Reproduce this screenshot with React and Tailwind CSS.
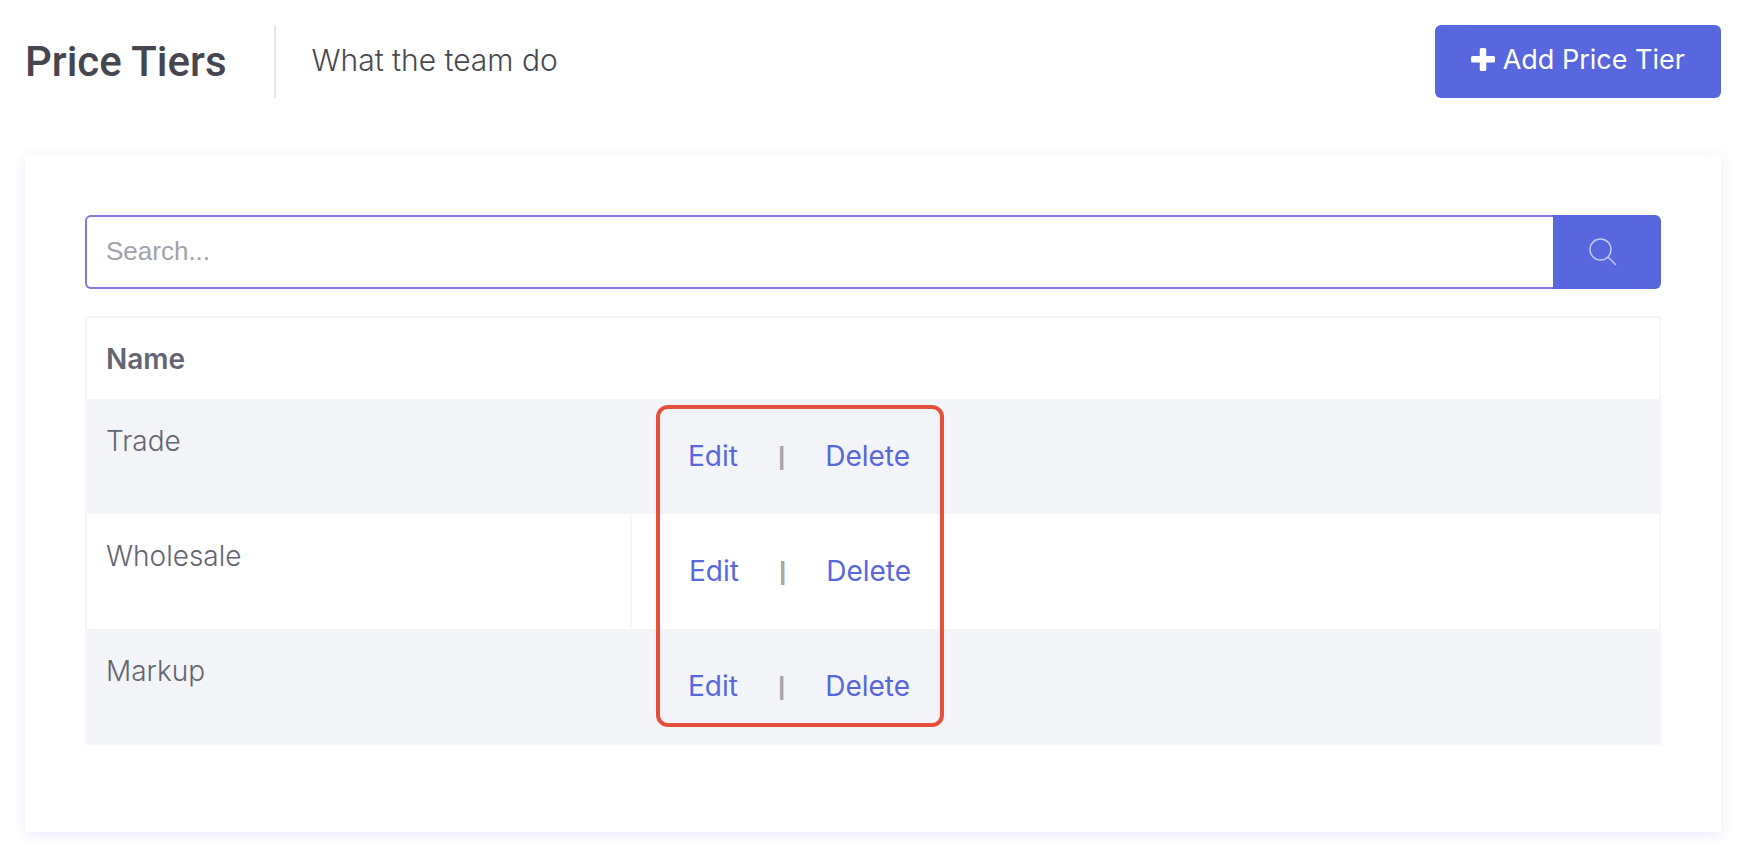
const tiers = [
  { id: 1, name: "Trade" },
  { id: 2, name: "Wholesale" },
  { id: 3, name: "Markup" },
];

function PlusIcon() {
  return (
    <svg className="size-6" viewBox="0 0 24 24" fill="currentColor" aria-hidden="true">
      <rect x="8.75" y="0" width="6.5" height="23" rx="1.5" />
      <rect x="0" y="8" width="24" height="6.5" rx="1.5" />
    </svg>
  );
}

function SearchIcon() {
  return (
    <svg className="size-7" viewBox="0 0 28 28" fill="none" stroke="#c3c9f5" strokeWidth="1.5" aria-hidden="true">
      <circle cx="11.5" cy="11.5" r="10.5" />
      <path d="M19 19 L27 27" />
    </svg>
  );
}

export default function App() {
  return (
    <main className="bg-white pt-[25px] pr-[19px] pb-[27px] pl-[25px] font-[Inter,sans-serif] text-[28px] leading-[38px] font-light text-[#646571]">
      <header className="flex items-stretch justify-between">
        <div className="flex items-center">
          <h1 className="pr-[47px] font-[Roboto,sans-serif] text-[42px] leading-[70px] font-medium text-[#464650]">Price Tiers</h1>
          <p className="flex items-center self-stretch border-l-2 border-[#e3e6f0] pb-1 pl-9 text-[30px] text-[#48494f]">What the team do</p>
        </div>
        <button type="button" className="flex h-[73px] items-center gap-2 rounded-md bg-[#5867dd] px-9 pb-1 text-[27px] font-normal text-white">
          <PlusIcon />
          Add Price Tier
        </button>
      </header>

      <section className="mt-[57px] bg-white px-[60px] pt-[60px] pb-[87px] shadow-[0_2px_12px_rgba(82,63,205,0.12)]">
        <form className="flex h-[74px]" onSubmit={(e) => e.preventDefault()}>
          <input
            type="text"
            aria-label="Search"
            placeholder="Search..."
            className="min-w-0 flex-1 rounded-l-md border-2 border-r-0 border-[#8178d6] px-[19px] pb-0.5 font-[Liberation_Sans,sans-serif] text-[26px] font-normal outline-none placeholder:text-[#a2a3ad]"
          />
          <button type="submit" aria-label="Search" className="flex w-[108px] items-center rounded-r-md bg-[#5867dd] pl-9">
            <SearchIcon />
          </button>
        </form>

        <table className="mt-[27px] w-full table-fixed border-collapse border-2 border-[#f5f6fa]">
          <colgroup>
            <col className="w-[545px]" />
            <col />
          </colgroup>
          <thead>
            <tr className="h-[82px]">
              <th colSpan={2} className="px-[19px] text-left font-semibold">Name</th>
            </tr>
          </thead>
          <tbody>
            {tiers.map((tier, i) => (
              <tr key={tier.id} className="group h-[115px] align-top odd:bg-[#f3f4f8]">
                <td className="border-[#f5f6fa] px-[19px] pt-[23px] group-even:border-r-2">{tier.name}</td>
                <td className="relative pt-[38px] pl-[57px]">
                  <div className="flex items-center font-normal text-[#5867dd]">
                    <a href="#edit">Edit</a>
                    <span className="px-10 font-[Liberation_Sans,sans-serif] text-[26px] font-bold text-[#a6a6aa]">|</span>
                    <a href="#delete">Delete</a>
                  </div>
                  {i === 0 && (
                    <div className="pointer-events-none absolute top-1.5 left-[25px] z-10 h-[322px] w-[288px] rounded-xl border-4 border-[#e6503a]" />
                  )}
                </td>
              </tr>
            ))}
          </tbody>
        </table>
      </section>
    </main>
  );
}
